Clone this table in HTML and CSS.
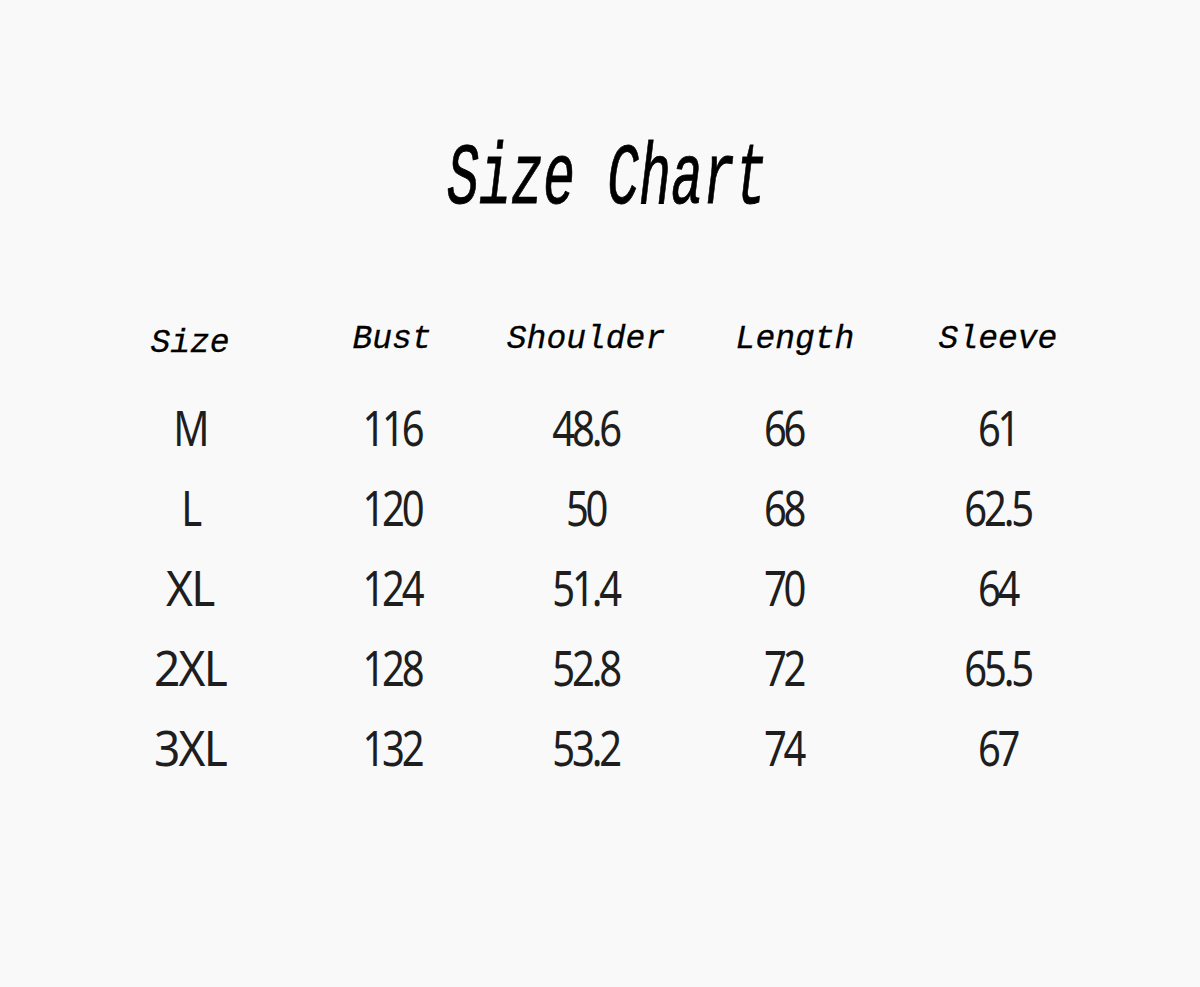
FILE: index.html
```html
<!DOCTYPE html>
<html lang="en">
<head>
<meta charset="utf-8">
<title>Size Chart</title>
<link rel="stylesheet" href="styles.css">
</head>
<body>
<main class="page">
  <h1 class="title"><span class="title-text">Size Chart</span></h1>
  <div class="chart">
    <div class="hdr hdr-low">Size</div>
    <div class="hdr">Bust</div>
    <div class="hdr">Shoulder</div>
    <div class="hdr">Length</div>
    <div class="hdr">Sleeve</div>

    <div class="cell"><span>M</span></div>
    <div class="cell"><span>116</span></div>
    <div class="cell"><span>48.6</span></div>
    <div class="cell c4"><span>66</span></div>
    <div class="cell"><span>61</span></div>

    <div class="cell"><span>L</span></div>
    <div class="cell"><span>120</span></div>
    <div class="cell"><span>50</span></div>
    <div class="cell c4"><span>68</span></div>
    <div class="cell"><span>62.5</span></div>

    <div class="cell"><span class="wide">XL</span></div>
    <div class="cell"><span>124</span></div>
    <div class="cell"><span>51.4</span></div>
    <div class="cell c4"><span>70</span></div>
    <div class="cell"><span>64</span></div>

    <div class="cell"><span class="wide">2XL</span></div>
    <div class="cell"><span>128</span></div>
    <div class="cell"><span>52.8</span></div>
    <div class="cell c4"><span>72</span></div>
    <div class="cell"><span>65.5</span></div>

    <div class="cell"><span class="wide">3XL</span></div>
    <div class="cell"><span>132</span></div>
    <div class="cell"><span>53.2</span></div>
    <div class="cell c4"><span>74</span></div>
    <div class="cell"><span>67</span></div>
  </div>
</main>
</body>
</html>
```
FILE: styles.css
```css
html, body {
  margin: 0;
  padding: 0;
  background: #f9f9f9;
}
.page {
  width: 1200px;
  height: 987px;
  padding-top: 130px;
  box-sizing: border-box;
}
.title {
  margin: 0;
  text-align: center;
  font-family: "Liberation Mono", monospace;
  font-style: italic;
  font-weight: normal;
  font-size: 88px;
  line-height: 100px;
  color: #000;
  padding-left: 14px;
}
.title-text {
  display: inline-block;
  transform: scaleX(0.606);
  -webkit-text-stroke: 0.9px #000;
}
.chart {
  margin-top: 90px;
  margin-left: 90px;
  display: grid;
  grid-template-columns: 200px 204px 184px 234px 172px;
  grid-template-rows: 67px;
  grid-auto-rows: 80px;
}
.hdr {
  text-align: center;
  font-family: "Liberation Mono", monospace;
  font-style: italic;
  font-size: 33px;
  line-height: 40px;
  color: #000;
  -webkit-text-stroke: 0.3px #000;
}
.hdr-low {
  padding-top: 4px;
}
.cell {
  text-align: center;
  font-family: "Noto Sans", sans-serif;
  font-size: 50px;
  line-height: 80px;
  color: #1e1e1e;
}
.cell span {
  display: inline-block;
  letter-spacing: -4px;
  transform: scaleX(0.8);
}
.cell .wide {
  letter-spacing: -2px;
  transform: scaleX(0.92);
}
.c4 {
  padding-right: 22px;
}
```
